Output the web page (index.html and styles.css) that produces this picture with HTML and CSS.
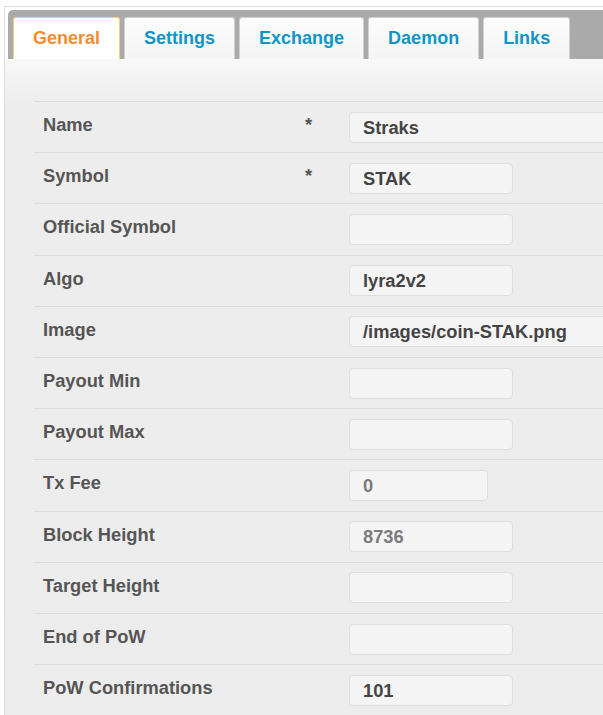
FILE: index.html
```html
<!DOCTYPE html>
<html>
<head>
<meta charset="utf-8">
<link rel="stylesheet" href="styles.css">
</head>
<body>
<div class="tabs">
  <ul class="nav">
    <li class="tab active">General</li>
    <li class="tab">Settings</li>
    <li class="tab">Exchange</li>
    <li class="tab">Daemon</li>
    <li class="tab">Links</li>
  </ul>
  <div class="panel">
    <div class="form">
      <div class="row"><div class="label">Name</div><div class="req">*</div><div class="input wide">Straks</div></div>
      <div class="row"><div class="label">Symbol</div><div class="req">*</div><div class="input">STAK</div></div>
      <div class="row"><div class="label">Official Symbol</div><div class="req"></div><div class="input"></div></div>
      <div class="row"><div class="label">Algo</div><div class="req"></div><div class="input">lyra2v2</div></div>
      <div class="row"><div class="label">Image</div><div class="req"></div><div class="input wide">/images/coin-STAK.png</div></div>
      <div class="row"><div class="label">Payout Min</div><div class="req"></div><div class="input"></div></div>
      <div class="row"><div class="label">Payout Max</div><div class="req"></div><div class="input"></div></div>
      <div class="row"><div class="label">Tx Fee</div><div class="req"></div><div class="input small disabled">0</div></div>
      <div class="row"><div class="label">Block Height</div><div class="req"></div><div class="input disabled">8736</div></div>
      <div class="row"><div class="label">Target Height</div><div class="req"></div><div class="input"></div></div>
      <div class="row"><div class="label">End of PoW</div><div class="req"></div><div class="input"></div></div>
      <div class="row"><div class="label">PoW Confirmations</div><div class="req"></div><div class="input">101</div></div>
    </div>
  </div>
</div>
</body>
</html>
```
FILE: styles.css
```css
html, body {
  margin: 0;
  padding: 0;
  overflow: hidden;
  background: #fff;
}
body {
  font-family: "Liberation Sans", Arial, sans-serif;
  width: 603px;
  height: 715px;
}
.tabs {
  margin: 6px 0 0 4px;
  width: 599px;
  height: 709px;
  overflow: hidden;
  border: 1px solid #dcdcdc;
  border-right: none;
  border-bottom: none;
  padding: 3px 0 0 3px;
  box-sizing: border-box;
  background: linear-gradient(to bottom, #fff 0, #fff 52px, #f8f8f8 52px, #ededed 96px, #ececec 100%);
}
.nav {
  list-style: none;
  margin: 0;
  padding: 7px 0 0 5px;
  height: 49px;
  box-sizing: border-box;
  background: #aaa;
  border-radius: 5px 0 0 0;
  display: flex;
  align-items: flex-end;
  gap: 4px;
}
.tab {
  height: 42px;
  box-sizing: border-box;
  padding: 0 19px;
  border: 1px solid #d0d0d0;
  border-bottom: none;
  border-radius: 3px 3px 0 0;
  background: linear-gradient(to bottom, #fcfcfc 0%, #f4f4f4 100%);
  color: #1195c8;
  font-weight: bold;
  font-size: 18px;
  line-height: 41px;
}
.tab.active {
  background: #fff;
  border-color: #f9cd7c;
  color: #f58c2c;
}
.panel {
  padding: 42px 0 0 26px;
}
.form {
  display: flex;
  flex-direction: column;
}
.row {
  display: flex;
  align-items: flex-start;
  height: 51.2px;
  box-sizing: border-box;
  border-top: 1px solid #dcdcdc;
}
.label {
  width: 271px;
  flex: none;
  box-sizing: border-box;
  padding: 13px 0 0 9px;
  font-weight: bold;
  font-size: 18.3px;
  line-height: 20px;
  color: #555;
  white-space: nowrap;
}
.req {
  width: 44px;
  flex: none;
  padding-top: 13px;
  font-weight: bold;
  font-size: 18.3px;
  line-height: 20px;
  color: #555;
}
.input {
  flex: none;
  margin-top: 9.7px;
  width: 164px;
  height: 31px;
  box-sizing: border-box;
  border: 1px solid #dedede;
  border-radius: 4px;
  background: #f4f4f4;
  padding: 0 0 0 13px;
  font-weight: bold;
  font-size: 18.3px;
  line-height: 30px;
  color: #444;
  white-space: nowrap;
  overflow: hidden;
}
.input.wide {
  width: 300px;
}
.input.small {
  width: 139px;
}
.input.disabled {
  color: #7b7b7b;
}
```
